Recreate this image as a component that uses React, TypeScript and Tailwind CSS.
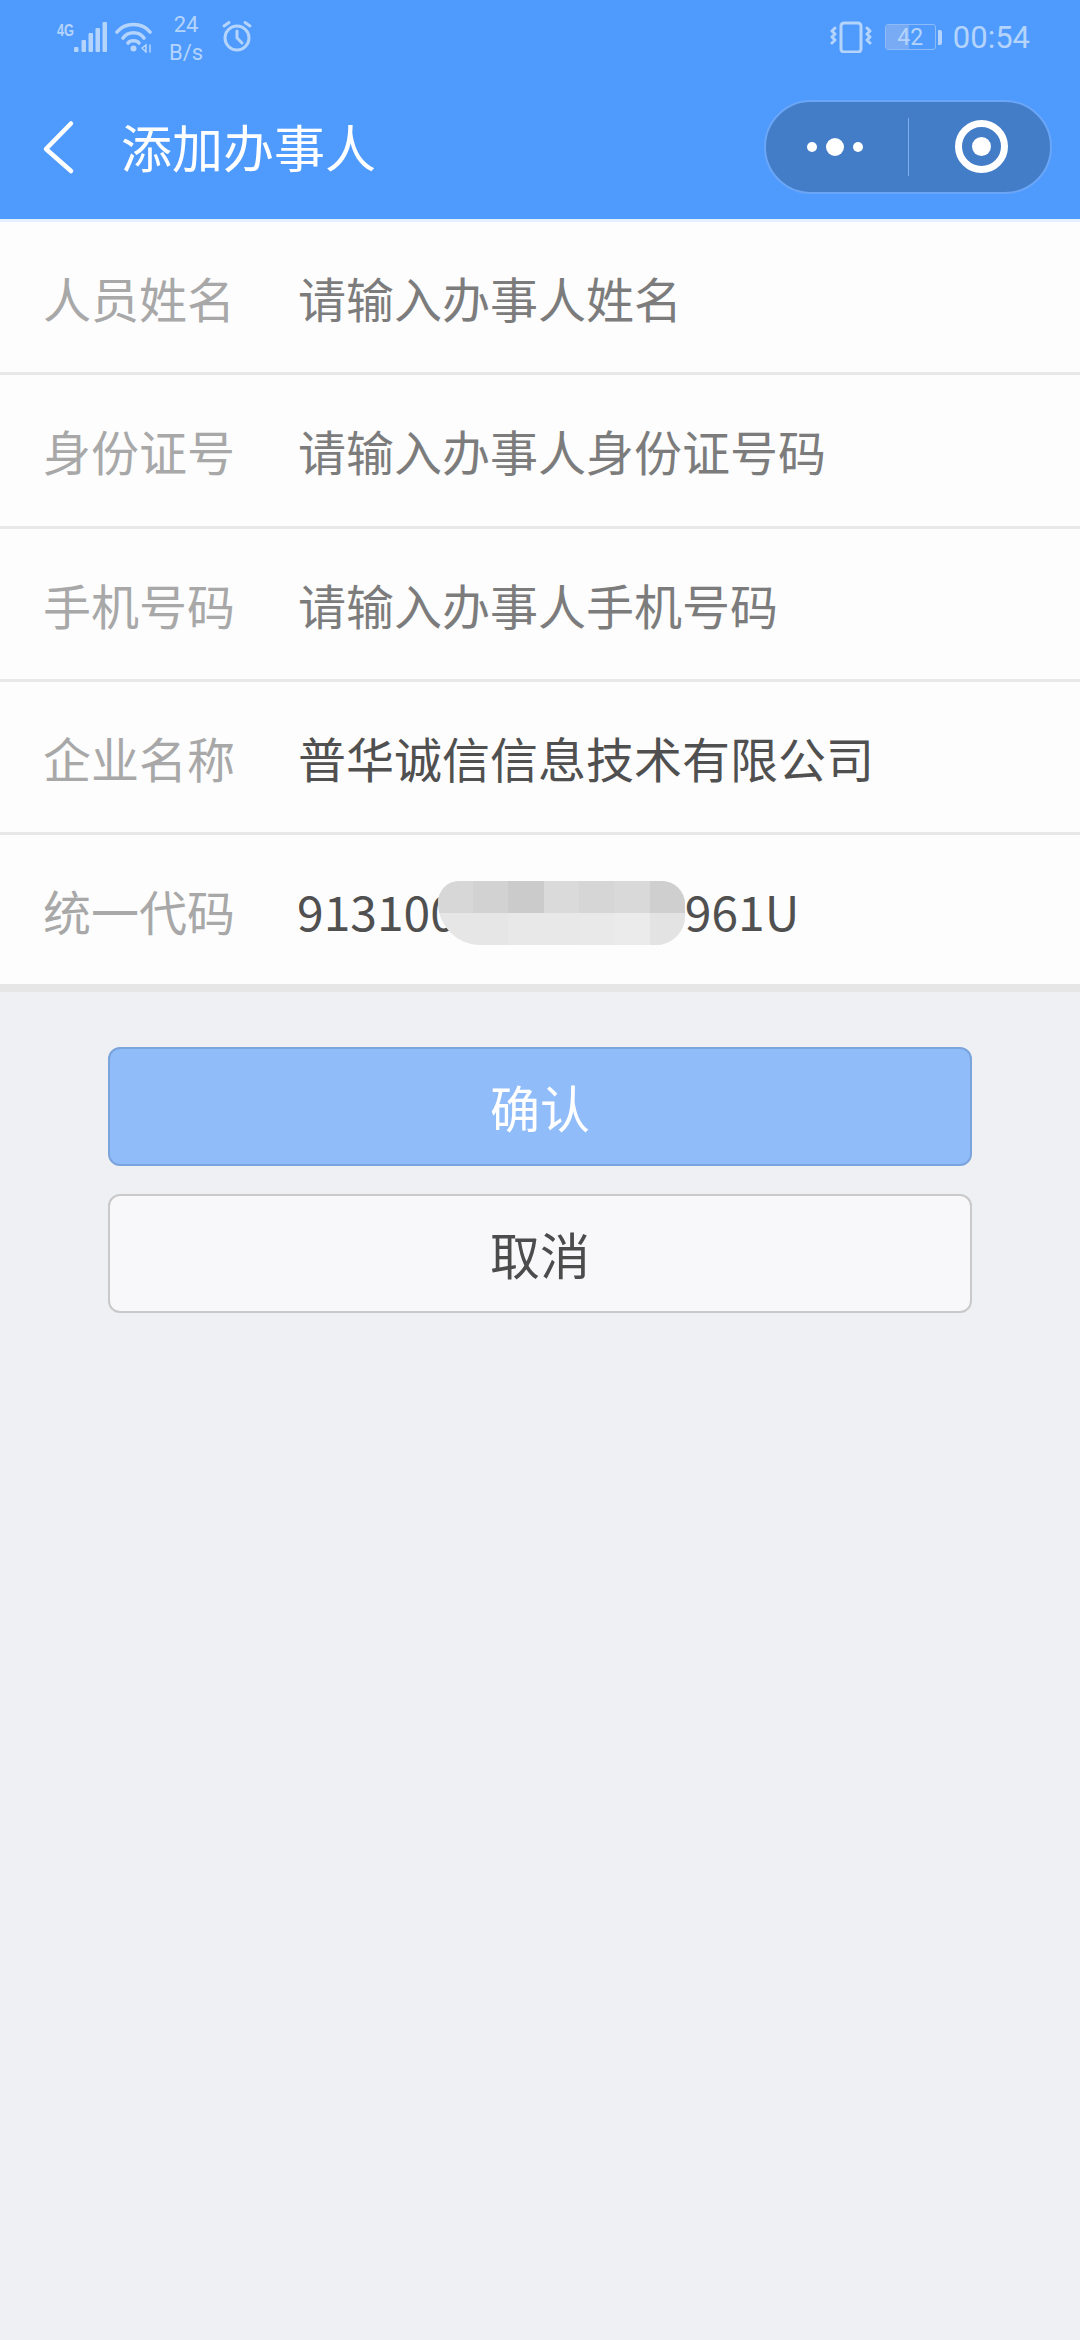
const rows = [
  { label: "人员姓名", value: "请输入办事人姓名", filled: false },
  { label: "身份证号", value: "请输入办事人身份证号码", filled: false },
  { label: "手机号码", value: "请输入办事人手机号码", filled: false },
  { label: "企业名称", value: "普华诚信信息技术有限公司", filled: true },
];

const cjk = "font-['Noto_Sans_CJK_SC','Noto_Sans',sans-serif]";

function StatusLeft() {
  return (
    <div className="flex items-start text-[#b4d4fc]">
      {/* 4G + signal */}
      <svg width="52" height="32" viewBox="0 0 52 32" className="ml-[56px] mt-[21px]" fill="currentColor">
        <text x="1" y="15" fontSize="16" fontWeight="700" fontFamily="Liberation Sans, sans-serif" textLength="17" lengthAdjust="spacingAndGlyphs">4G</text>
        <rect x="18" y="26" width="4.5" height="5" rx="1" />
        <rect x="25.5" y="19" width="4.5" height="12" rx="1" />
        <rect x="32.5" y="12" width="4.5" height="19" rx="1" />
        <rect x="39.5" y="7" width="4.5" height="24" rx="1" />
        <rect x="46.5" y="1" width="4.5" height="30" rx="1" />
      </svg>
      {/* wifi */}
      <svg width="40" height="32" viewBox="0 0 40 32" className="ml-[7px] mt-[21px]" fill="none" stroke="currentColor" strokeWidth="3.6" strokeLinecap="round">
        <path d="M2 11C10 1 27 1 35 11" />
        <path d="M8 17C13 10 24 10 29 17" />
        <path d="M13 22C15 19 22 19 24 22" />
        <circle cx="18.5" cy="27.5" r="3" fill="currentColor" stroke="none" />
        <path d="M27 27l4-3v7zM35 24v7" strokeWidth="1.5" />
      </svg>
      <div className="ml-[13px] mt-[11px] flex w-[36px] flex-col items-center font-['Roboto',sans-serif] text-[22px] leading-[28px]">
        <span>24</span>
        <span>B/s</span>
      </div>
      {/* alarm */}
      <svg width="32" height="32" viewBox="0 0 32 32" className="ml-[17px] mt-[20px]" fill="none" stroke="currentColor" strokeWidth="3" strokeLinecap="round">
        <circle cx="16" cy="18" r="12" />
        <path d="M16 11v7l5 5" />
        <path d="M3 6l5-3.5M29 6l-5-3.5" />
      </svg>
    </div>
  );
}

function StatusRight() {
  return (
    <div className="mr-[50px] flex items-center text-[#b4d4fc]">
      {/* vibrate */}
      <svg width="42" height="32" viewBox="0 0 42 32" fill="none" stroke="currentColor" strokeWidth="3" strokeLinecap="round" strokeLinejoin="round">
        <rect x="11" y="2" width="20" height="29" rx="3" />
        <path d="M5 7l-3 3 3 3-3 3 3 3-3 3M37 7l3 3-3 3 3 3-3 3 3 3" />
      </svg>
      <div className="ml-[13px] flex items-center">
        <div className="relative flex h-[26px] w-[51px] items-center justify-center overflow-hidden rounded-[3px] border border-[#8dbbf8]">
          <div className="absolute bottom-0 left-0 top-0 w-[23px] bg-[#78abf3]" />
          <span className="relative font-['Roboto',sans-serif] text-[23px] leading-none">42</span>
        </div>
        <div className="ml-[2px] h-[15px] w-[4px] rounded-r-[2px] bg-[#b4d4fc]" />
      </div>
      <span className="ml-[11px] font-['Roboto',sans-serif] text-[31px] leading-none">00:54</span>
    </div>
  );
}

function Capsule() {
  return (
    <div className="mr-[28px] flex h-[94px] w-[288px] items-center rounded-full border-2 border-[#6aa6f7] bg-[#437dc8]">
      <div className="flex w-[142px] items-center justify-center gap-[9px] pr-[4px]">
        <span className="h-[10px] w-[10px] rounded-full bg-white" />
        <span className="h-[18px] w-[18px] rounded-full bg-white" />
        <span className="h-[10px] w-[10px] rounded-full bg-white" />
      </div>
      <div className="h-[58px] w-[1px] bg-[#7fb0ee]" />
      <div className="flex flex-1 items-center justify-center pl-[4px]">
        <div className="flex h-[53px] w-[53px] items-center justify-center rounded-full border-[7px] border-white">
          <span className="h-[19px] w-[19px] rounded-full bg-white" />
        </div>
      </div>
    </div>
  );
}

export default function App() {
  return (
    <div className={`flex min-h-[2340px] w-[1080px] flex-col bg-[#eff0f3] ${cjk}`}>
      {/* Header */}
      <div className="flex h-[219px] flex-col bg-[#4f9bfd]">
        <div className="flex h-[88px] items-start justify-between">
          <StatusLeft />
          <div className="mt-[21px]">
            <StatusRight />
          </div>
        </div>
        <div className="flex h-[117px] items-center justify-between">
          <div className="flex items-center">
            <svg width="36" height="56" viewBox="0 0 36 56" className="ml-[40px]" fill="none" stroke="white" strokeWidth="4.5" strokeLinecap="round" strokeLinejoin="round">
              <path d="M31 4.5L6 30L31 52" />
            </svg>
            <span className="ml-[45px] text-[51px] leading-none text-white">添加办事人</span>
          </div>
          <Capsule />
        </div>
      </div>

      {/* Form */}
      <div className="flex flex-col border-t-[3px] border-[#e4f0fd] bg-[#fdfdfd]">
        {rows.map((row) => (
          <div key={row.label} className="flex h-[153.3px] items-center border-b-[3px] border-[#e8e8e8] pl-[43px]">
            <span className="w-[255px] text-[48px] text-[#a8a8a8]">{row.label}</span>
            <span className={row.filled ? "text-[48px] text-[#505050]" : "text-[48px] text-[#7c7c7c]"}>{row.value}</span>
          </div>
        ))}
        <div className="flex h-[149px] items-center pl-[43px]">
          <span className="w-[254px] text-[48px] text-[#a8a8a8]">统一代码</span>
          <span className="whitespace-nowrap text-[48px] text-[#505050]">913100</span>
          {/* mosaic over the blanked digits */}
          <div className="relative -ml-[19px] mt-[7px] grid h-[64px] w-[247px] grid-cols-7 grid-rows-2 overflow-hidden rounded-bl-[44px] rounded-br-[30px] rounded-tl-[22px] rounded-tr-[24px] bg-[#e6e6e6]">
            <div className="bg-[#d7d7d7]" />
            <div className="bg-[#d2d2d2]" />
            <div className="bg-[#cbcbcb]" />
            <div className="bg-[#dadada]" />
            <div className="bg-[#d6d6d6]" />
            <div className="bg-[#d9d9d9]" />
            <div className="bg-[#cfcfcf]" />
            <div className="bg-[#e6e6e6]" />
            <div className="bg-[#e6e6e6]" />
            <div className="bg-[#e8e8e8]" />
            <div className="bg-[#e8e8e8]" />
            <div className="bg-[#e9e9e9]" />
            <div className="bg-[#ebebeb]" />
            <div className="bg-[#e3e3e3]" />
          </div>
          <span className="text-[48px] text-[#505050]">961U</span>
        </div>
        <div className="h-[8px] bg-[#e6e6e7]" />
      </div>

      {/* Buttons */}
      <div className="flex flex-col gap-[28px] px-[108px] pt-[55px]">
        <button className="flex h-[119px] items-center justify-center rounded-[12px] border-2 border-[#7ba4dd] bg-[#90bdf9] text-[50px] text-white">
          确认
        </button>
        <button className="flex h-[119px] items-center justify-center rounded-[12px] border-2 border-[#c9c9c9] bg-[#f8f8fa] text-[50px] text-[#4c4c4c]">
          取消
        </button>
      </div>
    </div>
  );
}
